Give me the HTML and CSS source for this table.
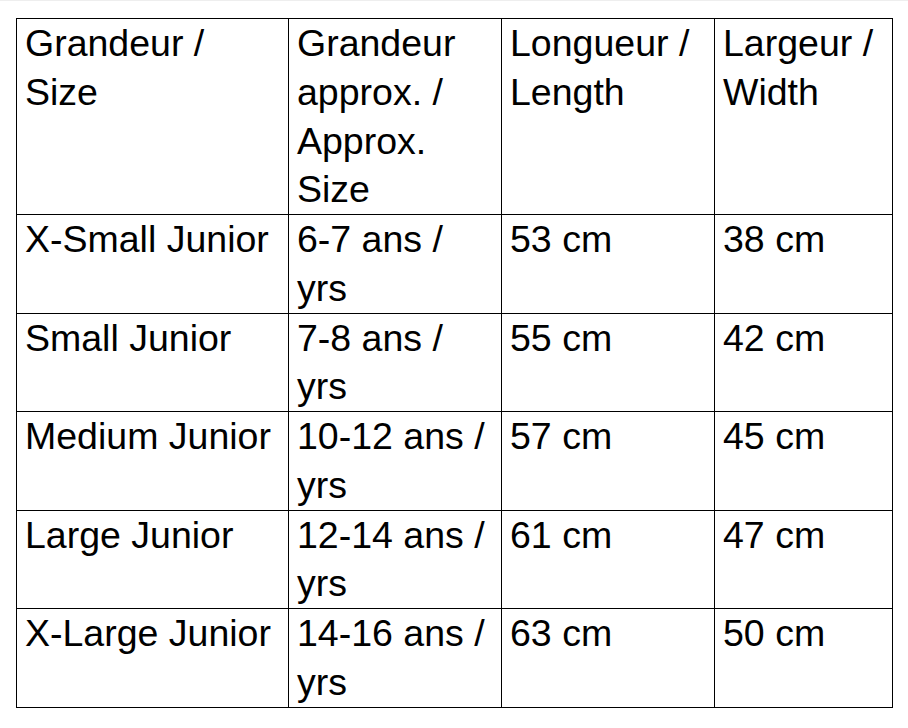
FILE: index.html
```html
<!DOCTYPE html>
<html lang="fr">
<head>
<meta charset="utf-8">
<title>Tableau des grandeurs</title>
<link rel="stylesheet" href="styles.css">
</head>
<body>
<div class="topline"></div>
<main class="page">
  <table class="sizes">
    <colgroup>
      <col class="c1"><col class="c2"><col class="c3"><col class="c4">
    </colgroup>
    <thead>
      <tr class="head">
        <th>Grandeur / Size</th>
        <th>Grandeur approx. / Approx. Size</th>
        <th>Longueur / Length</th>
        <th>Largeur / Width</th>
      </tr>
    </thead>
    <tbody>
      <tr><td>X-Small Junior</td><td>6-7 ans / yrs</td><td>53 cm</td><td>38 cm</td></tr>
      <tr><td>Small Junior</td><td>7-8 ans / yrs</td><td>55 cm</td><td>42 cm</td></tr>
      <tr><td>Medium Junior</td><td>10-12 ans / yrs</td><td>57 cm</td><td>45 cm</td></tr>
      <tr><td>Large Junior</td><td>12-14 ans / yrs</td><td>61 cm</td><td>47 cm</td></tr>
      <tr><td>X-Large Junior</td><td>14-16 ans / yrs</td><td>63 cm</td><td>50 cm</td></tr>
    </tbody>
  </table>
</main>
</body>
</html>
```
FILE: styles.css
```css
html, body {
  margin: 0;
  padding: 0;
  background: #ffffff;
}
body {
  font-family: "Liberation Sans", Arial, sans-serif;
  color: #000000;
}
.topline {
  height: 1px;
  background: #eeeeee;
}
.page {
  padding: 17px 0 0 16px;
}
.sizes {
  border-collapse: collapse;
  table-layout: fixed;
  width: 876px;
  font-size: 37.5px;
  line-height: 48.75px;
}
.sizes .c1 { width: 272px; }
.sizes .c2 { width: 213px; }
.sizes .c3 { width: 213px; }
.sizes .c4 { width: 178px; }
.sizes th,
.sizes td {
  border: 1px solid #000000;
  padding: 0 10px 0 8px;
  text-align: left;
  vertical-align: top;
  font-weight: normal;
}
```
